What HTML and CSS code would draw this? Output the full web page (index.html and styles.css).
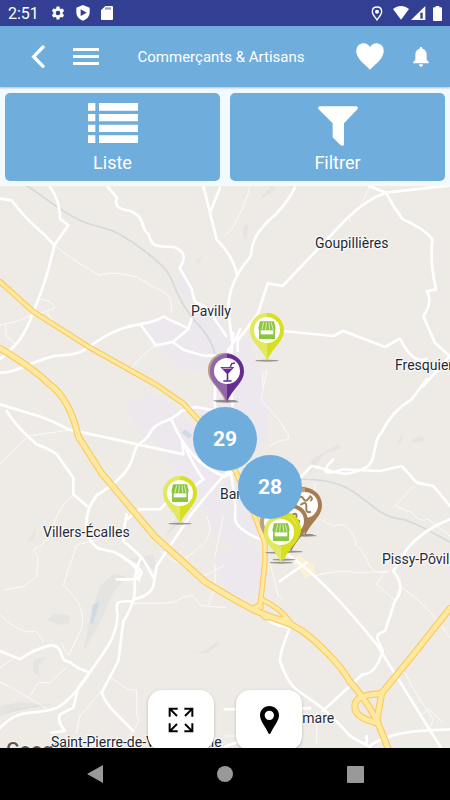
FILE: index.html
```html
<!DOCTYPE html>
<html lang="fr">
<head>
<meta charset="UTF-8" />
<meta name="viewport" content="width=device-width, initial-scale=1.0"/>
<title>Commerçants &amp; Artisans</title>
<link rel="stylesheet" href="styles.css">
</head>
<body>

<svg class="defs" aria-hidden="true">
  <symbol id="shop" viewBox="0 0 54 54">
    <path fill="#8cc63f" d="M6 1h42l5 21a6 6 0 0 1-9 5H10a6 6 0 0 1-9-5z"/>
    <path fill="none" stroke="#fff" stroke-width="2" d="M17 4l-5 22M25 4l-2 22M33 4l2 22M40 4l5 22"/>
    <path fill="#8cc63f" d="M3 27h48v27H3z"/>
    <path fill="#fff" d="M8 28h38v12H8z"/>
  </symbol>
  <symbol id="pin" viewBox="0 0 108 156">
    <ellipse cx="54" cy="146" rx="35" ry="3" fill="#777" opacity=".75"/>
    <path fill="currentColor" d="M54 3C25 3 3 26 3 54c0 18 8 30 18 43 14 18 27 33 33 50 6-17 19-32 33-50 10-13 18-25 18-43C105 26 83 3 54 3z"/>
    <path fill="#fff" opacity=".28" d="M54 3C25 3 3 26 3 54c0 18 8 30 18 43 14 18 27 33 33 50z"/>
    <circle cx="54" cy="54" r="39" fill="#fff"/>
  </symbol>
</svg>

<div class="status">
  <span class="time">2:51</span>
  <svg width="14" height="14" viewBox="0 0 24 24"><path fill="#fff" fill-rule="evenodd" d="M9.500 1h5l.5 3.200 2 1.100 3-1.200 2.500 4.400-2.500 2v3l2.500 2-2.500 4.400-3-1.200-2 1.100-.5 3.200h-5L9 19.800l-2-1.100-3 1.200-2.500-4.400 2.500-2v-3l-2.500-2L4 4.100l3 1.200 2-1.100zM12 8a4 4 0 1 0 0 8 4 4 0 0 0 0-8z"/></svg>
  <svg width="14" height="16" viewBox="0 0 42 48"><path fill="#fff" fill-rule="evenodd" d="M21 0l20 8v14c0 12-8 21-20 25C9 43 1 34 1 22V8zM14 13v20l18-10z"/></svg>
  <svg width="12" height="14" viewBox="0 0 36 42"><path fill="#fff" d="M13 0h20a3 3 0 0 1 3 3v36a3 3 0 0 1-3 3H3a3 3 0 0 1-3-3V13z"/><path stroke="#323f92" stroke-width="3" d="M15 4v7M21 4v7M27 4v7"/></svg>
  <span class="spacer"></span>
  <svg class="gps" width="12" height="15" viewBox="0 0 36 45"><path fill="none" stroke="#fff" stroke-width="4" d="M18 3C9 3 4 9 4 17c0 9 8 16 14 25 6-9 14-16 14-25C32 9 27 3 18 3z"/><circle cx="18" cy="17" r="6" fill="#fff"/></svg>
  <svg width="16" height="14" viewBox="0 0 48 42"><path fill="#fff" d="M0 9C15-3 33-3 48 9L24 41z"/></svg>
  <svg width="15" height="14" viewBox="0 0 45 42"><path fill="#fff" d="M0 42L43 0v42z"/><path fill="#323f92" d="M28 20h7v18h-7z"/></svg>
  <svg class="battery" width="9" height="15" viewBox="0 0 27 45"><path fill="#fff" d="M8 0h11v4h5a3 3 0 0 1 3 3v35a3 3 0 0 1-3 3H3a3 3 0 0 1-3-3V7a3 3 0 0 1 3-3h5z"/></svg>
</div>

<header class="topbar">
  <button class="icon-btn" aria-label="Retour">
    <svg width="14" height="23" viewBox="0 0 42 69"><path fill="none" stroke="#fff" stroke-width="10" stroke-linecap="round" d="M36 6L8 35l28 29"/></svg>
  </button>
  <button class="icon-btn" aria-label="Menu">
    <svg width="26" height="19" viewBox="0 0 26 19"><path fill="#fff" d="M0 1h26v3H0zM0 8h26v3H0zM0 15h26v3H0z"/></svg>
  </button>
  <h1>Commerçants &amp; Artisans</h1>
  <button class="icon-btn" aria-label="Favoris">
    <svg width="28" height="27" viewBox="0 0 84 81"><path fill="#fff" d="M42 12C34-2 18-2 9 5-1 13-1 28 5 40c8 16 24 27 37 40 13-13 29-24 37-40 6-12 6-27-4-35C66-2 50-2 42 12z"/></svg>
  </button>
  <button class="icon-btn" aria-label="Notifications">
    <svg width="16" height="20" viewBox="0 0 48 60"><path fill="#fff" d="M24 0c3 0 4 2 4 5 9 2 13 9 13 18v15l6 7v4H1v-4l6-7V23c0-9 4-16 13-18 0-3 1-5 4-5zM18 52h12c0 4-2 7-6 7s-6-3-6-7z"/></svg>
  </button>
</header>

<nav class="tabs">
  <button class="tab">
    <svg width="50" height="40" viewBox="0 0 150 120"><path fill="#fff" d="M2 0h20v23H0V2zM33 0h117v23H33zM0 33h22v22H0zM33 33h117v22H33zM0 65h22v22H0zM33 65h117v22H33zM0 97h22v23H0zM33 97h117v23H33z"/></svg>
    <span>Liste</span>
  </button>
  <button class="tab">
    <svg width="40" height="40" viewBox="0 0 120 120"><path fill="#fff" d="M4 1h112q5 2 3 8L78 52v66q-6 3-11-1L44 94V52L1 9q-2-6 3-8z"/></svg>
    <span>Filtrer</span>
  </button>
</nav>

<main class="map">
  <svg class="roads" viewBox="0 0 1350 1686" preserveAspectRatio="xMidYMid slice">
    <!-- built-up areas -->
    <g fill="#ece8ed">
      <path d="M425 410l65-24 75 45 15-70-50-60 20-65 30 55 8 52 82 38v150l-80 25-60-8-55-65z"/>
      <path d="M375 660l75-40 60 30 40 40 60 60 70 130 90 50 20 110-80 40-60-30-50-90-60-60-60-120-70-40z"/>
      <path d="M680 430l60 20 60 180 10 120-100 110-60-80-30-120z"/>
      <path d="M645 1115l60-50 70 20 20 110-60 45-60-30z"/>
    </g>
    <!-- woods and relief -->
    <g fill="#e6e4e0">
      <path d="M300 1200l40-35 40 5-40 50-40 90-50 85 20-95 20-70zM140 1302l20-18 48 4v22l-30 7zM100 1420l40-8-25 30 3 30-18-12zM785 30l30-30 12 8-15 15-30 15zM730 120l15-5-5 50-10-15zM585 225l22-15-12 25zM570 1400l40-3 40-30 12 5-40 30zM390 1120l70-15 10 50-30-15zM500 1050l50-50 10-60-40 70-20 30zM925 870l10-50 80-45 10 12-50 15zM1235 760l30-10 10 15-35 5zM1190 770l20-30-5 30zM80 1070l30-45-10 35zM0 1560l60-12 75 8-135 30z"/>
    </g>
    <path fill="#fdf0d4" d="M875 1122l20-15 45 30 5 25-30 15-15-25z"/>
    <path fill="#cddbe6" d="M270 1312l8-55 22-12-22 70zM545 740l10-10 22 18-10 10z"/>
    <g class="water">
      <path d="M80 0C120 20 180 80 250 107S330 115 440 200s50 80 140 200c30 30 60 70 65 110"/>
      <path d="M900 880c200-5 190 110 310 120 60 20 100 50 145 70"/>
      <path d="M0 1590q40-20 70-22l80-12" stroke-width="2"/>
    </g>

    <!-- lanes -->
    <g class="lane">
      <path d="M163 178q40 35 135 90c50-15 80 0 110 4q50 30 90 50c20 20 15 40 18 60M115 340c30 0 40 10 50 26q-30 14-50 16M0 418l60-15 40-18M18 418v30l28 26M142 382l18 28M395 545q30-40 72-66"/>
      <path d="M750 0q-10 50-40 100-10 30-35 48M1108 4q-25 60-58 90v12M800 550v8l-12 5v37M450 8"/>
      <path d="M800 560q-15 60-15 85 50 50 80 100v15q-40 5-55 20" />
      <path d="M0 835l35-35 50-50 125-18M220 927q-40 30-60 90t-60 75l15 20-5 60-40 30-60 10M290 1062l-60 15-40 120q70 60 55 130l-38 80q-20-20-22-35M620 990q30 60-30 100l-50 40-20-5-40-30M645 1110l25-120"/>
      <path d="M0 1287q60 60 110 50l20 30M0 1445l35-25M90 1530l25-40h35l50-45M0 1487q60 30 138 80M230 1640l10-50 60-70M330 1475l55 35 25 3v75q20 10-20 60M400 1252h80l40-3q30-20 58-20l25 30 72 5M625 1255l20-50v-70M0 1182"/>
      <path d="M810 1130l25 100 10 10M890 1120l55 50q50-20 140-10l85-5M1150 1165l-20 30 55 50 15-40M1205 1205q80 50 145 150M1215 1460l25 50 60 90-10 25M1260 1590l25-20 45 40M675 1650h50M950 1580v90"/>
      <path d="M960 1000l40 20q50-20 70 60c50 40 20 85 90 80M945 890v35M1240 900l-55 60 50 20q20 30 50 20l65 50M590 1180l80-40M1300 350"/>
    </g>

    <!-- secondary roads -->
    <g class="road">
      <path d="M0 38l35 5q40 55 95 100l33 35c-25 110-40 140-65 205S60 470 0 520M150 3q30 40 30 95l25 20-42 60M323 3l28 32q-15 32 40 40c50 20 30 60 55 70 10 40 20 35 75 38 30 10 40 30 18 63l35 60 10 40 40 22q25 40 55 82M610 0q25 100 40 160 50 50 62 110M660 5l-30 75"/>
      <path d="M0 560c50 0 60-20 160-50 90-5 80-10 140-50 100-60 140-35 190-68l75 36 10-30M425 420l43 58 50-10 48-40M518 468l32 23 60 18h35"/>
      <path d="M885 5q-30 60-80 100c-70 70-40 100-60 115q-60 70-60 150l10 90M1108 0l50 20q-60 20-120 80l-190 200-45-8-20 62-10 30-60 80v30M1158 20l192-22M1158 20q20 40 50 80 60 25 90 60-10 60 10 150l-28 6q20 30-10 75l35 80 45 40M850 435l150 15 30-15 125 48 45-25q40 80 80 60M1350 510l-80 90"/>
      <path d="M0 655c90 30 120 30 205 75l140 30 205 45-3-40M20 675q30 50 90 100 40 15 60 30l50 70v50l43 37M295 925l30-20q55-40 70-80c20-70 20-40 50-75 20-50 60-35 100-75l40-12 60 10V600M590 705M513 697q50 130 160 175M550 770q30 70 60 110l-40 30-60 30-30 30h-60l-40 30M292 925c-40 50-50 130 5 163l45 10q80 40 75 84M380 985q-10 40-10 80c60 50 60 50 90 110M690 850q-50 50-120 140l-80 120-20 30-10 60q-10 30-60 40"/>
      <path d="M700 440l-8 90 5 130M720 430q-15 40-35 60l10 120M690 850q20 100 15 140t90 75M680 870l30-25M1280 580l-45 60q-60 35-90 100c-30 20-10 100-60 110-60 30-90 0-150-10l-70 70M1000 820q-60 60 30 30l110 5 65-15 45 50 50 10 50 60M1350 1000q-80 30-130 90l-40 65q40 50 5 90l-30 90q-30 10-22 25l15 35q-20 70-60 70l-120 110M1350 960M860 1105q100 60 270 270l230 370M1165 1430"/>
      <path d="M795 1290q10 25 75 35-30 70-30 100c30 90 60 90 90 115q50 30 120 110 70 40 60 30 50-40 170-47l75-3M675 1570l255-3M920 1130l-80 55M990 1520"/>
      <path d="M0 1395l60 25q40-30 90-42c50 0 20 50 60 50q20 20 55 30M375 1120q80 40 30 60l-55 0M420 1120q-20 50-15 90l-5 35c-70 0-45 10-48 50-5 60-30 90-80 160q-50 80-100 110c-80 30-110-10-180 70M400 1245q-20 50-30 60l-15 120-50 95q10 30 40 60l55 55M265 1465l-30 40-15 60-40 20q-10 20 15 50l-40 5"/>
      <path d="M675 1682l80-30M1100 1650v20"/>
    </g>

    <!-- main roads, casing first then fill -->
    <g class="casing">
      <path d="M0 287L100 377l165 105 205 115 80 55 50 55 50 83 55 62 45 100 45 120v55l-13 118v20"/>
      <path d="M785 1240q60 30 85 68M785 1240q-5 20-20 24M765 1264l30 30 60 5"/>
      <path class="wide" d="M0 487q100 60 145 105 65 45 90 160l70 110 160 190 150 135q80 50 150 87l90 35c70 20 170 133 195 178 65 75 85 120 115 203"/>
      <path class="wide" d="M1350 1267l-115 145-90 110-15 85M1145 1522c-50 5-75 10-80 32-5 30 20 45 70 58"/>
    </g>
    <g class="highway">
      <path d="M0 287L100 377l165 105 205 115 80 55 50 55 50 83 55 62 45 100 45 120v55l-13 118v20"/>
      <path d="M785 1240q60 30 85 68M785 1240q-5 20-20 24M765 1264l30 30 60 5"/>
      <path class="wide" d="M0 487q100 60 145 105 65 45 90 160l70 110 160 190 150 135q80 50 150 87l90 35c70 20 170 133 195 178 65 75 85 120 115 203"/>
      <path class="wide" d="M1350 1267l-115 145-90 110-15 85M1145 1522c-50 5-75 10-80 32-5 30 20 45 70 58"/>
    </g>
  </svg>

  <span class="place goupillieres">Goupillières</span>
  <span class="place pavilly">Pavilly</span>
  <span class="place fresquiennes">Fresquiennes</span>
  <span class="place barentin">Barentin</span>
  <span class="place villers">Villers-Écalles</span>
  <span class="place pissy">Pissy-Pôville</span>
  <span class="place roumare">Roumare</span>
  <span class="google">Google</span>
  <span class="place saint-pierre">Saint-Pierre-de-Varengeville</span>

  <svg class="pin shop p1" viewBox="0 0 108 156"><use href="#pin"/><use href="#shop" x="27" y="27" width="54" height="54"/></svg>
  <svg class="pin food p2" viewBox="0 0 108 156"><use href="#pin"/></svg>
  <svg class="pin bar p3" viewBox="0 0 108 156">
    <use href="#pin"/>
    <path fill="#662d91" d="M34 42h42L58 62v20h10v4H43v-4h10V62z"/>
    <path fill="none" stroke="#662d91" stroke-width="4" d="M60 52l8-20 10-2"/>
    <path stroke="#fff" stroke-width="2" d="M41 46h26"/>
  </svg>
  <svg class="pin shop p4" viewBox="0 0 108 156"><use href="#pin"/><use href="#shop" x="27" y="27" width="54" height="54"/></svg>
  <svg class="pin food p5" viewBox="0 0 108 156"><use href="#pin"/></svg>
  <svg class="pin food p6" viewBox="0 0 108 156"><use href="#pin"/><path fill="none" stroke="#a67c52" stroke-width="6" d="M30 36q14-14 20 0t20-8q10 8 0 14M40 54q20-14 18 6t14 14"/></svg>
  <svg class="pin food p7" viewBox="0 0 108 156"><use href="#pin"/></svg>
  <svg class="pin food p8" viewBox="0 0 108 156"><use href="#pin"/><path fill="none" stroke="#a67c52" stroke-width="6" d="M50 40q24-18 20 4t10 18M65 60q20-18 10 8"/></svg>
  <svg class="pin shop p9" viewBox="0 0 108 156"><use href="#pin"/></svg>
  <svg class="pin shop p10" viewBox="0 0 108 156"><use href="#pin"/><use href="#shop" x="27" y="27" width="54" height="54"/></svg>

  <button class="cluster c29">29</button>
  <button class="cluster c28">28</button>

  <div class="map-tools">
    <button class="tool" aria-label="Agrandir">
      <svg width="26" height="26" viewBox="0 0 78 78"><path fill="none" stroke="#000" stroke-width="6" d="M5 29V5h24M5 5l22 22M49 5h24v24M73 5L51 27M5 49v24h24M5 73l22-22M73 49v24H49M73 73L51 51"/></svg>
    </button>
    <button class="tool" aria-label="Ma position">
      <svg width="19" height="28" viewBox="0 0 57 84"><path fill-rule="evenodd" d="M28 0C12 0 0 12 0 28c0 18 18 36 25 54q3 4 7 0c7-18 25-36 25-54C57 12 44 0 28 0zm0 14a14 14 0 1 1 0 28 14 14 0 0 1 0-28z"/></svg>
    </button>
  </div>
</main>

<footer class="android">
  <button aria-label="Précédent"><svg width="16" height="18" viewBox="0 0 16 18"><path fill="#999" d="M16 0v18L0 9z"/></svg></button>
  <button aria-label="Accueil"><svg width="16" height="16" viewBox="0 0 16 16"><circle cx="8" cy="8" r="8" fill="#999"/></svg></button>
  <button aria-label="Applications"><svg width="17" height="17" viewBox="0 0 17 17"><rect width="17" height="17" rx="1" fill="#999"/></svg></button>
</footer>

</body>
</html>
```
FILE: styles.css
```css
* {
  box-sizing: border-box;
}

body {
  margin: 0;
  height: 100vh;
  display: flex;
  flex-direction: column;
  font-family: Roboto, "Liberation Sans", sans-serif;
  background-color: #f3faff;
}

button {
  border: none;
  padding: 0;
  margin: 0;
  background: none;
  font-family: inherit;
  cursor: pointer;
}

svg {
  display: block;
}

.defs {
  position: absolute;
  width: 0;
  height: 0;
}

/* android status bar */
.status {
  height: 26px;
  flex-shrink: 0;
  display: flex;
  align-items: center;
  padding: 0 8px;
  background-color: #323f92;
  color: #fff;
}

.status svg {
  flex-shrink: 0;
}

.time {
  width: 43px;
  font-size: 16px;
}

.status svg + svg {
  margin-left: 11px;
}

.status .spacer {
  flex: 1;
}

.status .gps + svg {
  margin-left: 10px;
}

.status .gps + svg + svg {
  margin-left: 2px;
}

.status .battery {
  margin-left: 7px;
}

/* header */
.topbar {
  height: 61px;
  flex-shrink: 0;
  display: flex;
  align-items: center;
  padding: 0 21px 0 24px;
  background-color: #6faddd;
  box-shadow: 0 1px 2px rgba(0, 0, 0, 0.25);
  position: relative;
}

.icon-btn {
  width: 28px;
  height: 45px;
  display: flex;
  align-items: center;
  justify-content: center;
}

.icon-btn + .icon-btn {
  margin-left: 20px;
}

.topbar h1 {
  flex: 1;
  margin: 0;
  padding-right: 14px;
  font-size: 15px;
  font-weight: 400;
  text-align: center;
  color: #fff;
}

.topbar h1 + .icon-btn + .icon-btn {
  width: 16px;
  margin-left: 29px;
}

/* liste / filtrer */
.tabs {
  flex-shrink: 0;
  display: grid;
  grid-template-columns: 1fr 1fr;
  gap: 10px;
  padding: 6px 5px 5px;
}

.tab {
  height: 88px;
  display: flex;
  flex-direction: column;
  align-items: center;
  justify-content: space-between;
  padding: 10px 0 7px;
  border-radius: 5px;
  background-color: #6faddd;
  color: #fff;
  font-size: 18px;
  line-height: 22px;
}

.tab + .tab svg {
  margin-top: 3px;
}

/* map */
.map {
  flex: 1;
  min-height: 0;
  position: relative;
  overflow: hidden;
  background-color: #eeebe7;
}

.roads {
  position: absolute;
  width: 100%;
  height: 100%;
}

.roads g {
  stroke-linecap: round;
  stroke-linejoin: round;
}

.water,
.lane,
.road,
.casing,
.highway {
  fill: none;
}

.water {
  stroke: #d3d9dd;
  stroke-width: 5;
}

.lane {
  stroke: #fbfaf8;
  stroke-width: 3;
}

.road {
  stroke: #fff;
  stroke-width: 8;
}

.casing {
  stroke: #f9cb62;
  stroke-width: 17;
}

.casing .wide {
  stroke-width: 21;
}

.highway {
  stroke: #ffe99f;
  stroke-width: 10;
}

.highway .wide {
  stroke-width: 14;
}

.place {
  position: absolute;
  font-size: 14px;
  line-height: 18px;
  white-space: nowrap;
  color: #1f2a37;
  text-shadow: 0 0 2px #fff, 0 0 2px #fff, 1px 1px 1px #fff, -1px -1px 1px #fff;
}

.goupillieres { left: 315px; top: 48px; }
.pavilly { left: 191px; top: 116px; }
.fresquiennes { left: 395px; top: 170px; }
.barentin { left: 220px; top: 299px; }
.villers { left: 43px; top: 337px; }
.pissy { left: 382px; top: 364px; }
.roumare { left: 278px; top: 523px; }
.saint-pierre { left: 51px; top: 547px; }

.google {
  position: absolute;
  left: 6px;
  top: 552px;
  font-size: 20px;
  font-weight: 500;
  line-height: 24px;
  color: #555;
  text-shadow: 0 0 2px #fff;
}

.pin {
  position: absolute;
  width: 36px;
  height: 52px;
}

.shop { color: #d7df23; }
.food { color: #a67c52; }
.bar { color: #662d91; }

.p1 { left: 249px; top: 126px; }
.p2 { left: 207px; top: 166px; }
.p3 { left: 209px; top: 167px; }
.p4 { left: 162px; top: 289px; }
.p5 { left: 284px; top: 300px; }
.p6 { left: 287px; top: 301px; }
.p7 { left: 259px; top: 318px; }
.p8 { left: 273px; top: 317px; }
.p9 { left: 266px; top: 325px; }
.p10 { left: 263px; top: 328px; }

.cluster {
  position: absolute;
  width: 64px;
  height: 64px;
  border-radius: 50%;
  background-color: #6faddd;
  color: #fff;
  font-size: 21px;
  font-weight: 700;
}

.c29 { left: 193px; top: 221px; }
.c28 { left: 238px; top: 269px; }

.map-tools {
  position: absolute;
  left: 0;
  right: 0;
  bottom: -2px;
  display: flex;
  justify-content: center;
  gap: 22px;
}

.tool {
  width: 66px;
  height: 60px;
  display: flex;
  align-items: center;
  justify-content: center;
  border-radius: 14px;
  background-color: #fff;
  box-shadow: 0 1px 3px rgba(0, 0, 0, 0.25);
}

/* android navigation */
.android {
  height: 52px;
  flex-shrink: 0;
  display: flex;
  align-items: center;
  justify-content: center;
  gap: 82px;
  background-color: #000;
}

.android button {
  width: 48px;
  height: 48px;
  display: flex;
  align-items: center;
  justify-content: center;
}
```
